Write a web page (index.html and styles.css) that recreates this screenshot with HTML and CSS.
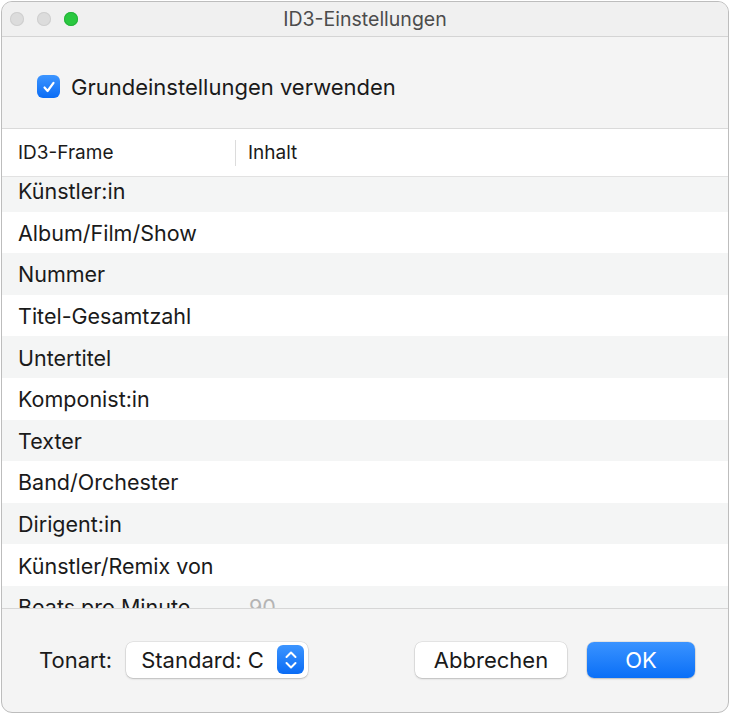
FILE: index.html
```html
<!DOCTYPE html>
<html lang="de">
<head>
    <meta charset="UTF-8">
    <title>ID3-Einstellungen</title>
    <link rel="stylesheet" href="styles.css">
</head>
<body>

<div class="window">
    <div class="titlebar">
        <div class="lights">
            <span class="light"></span>
            <span class="light"></span>
            <span class="light green"></span>
        </div>
        <div class="title">ID3-Einstellungen</div>
    </div>

    <div class="options">
        <label class="check">
            <span class="box">
                <svg width="16" height="16" viewBox="0 0 16 16">
                    <path d="M3.5 8.5 L6.6 12 L12.5 3.8" fill="none" stroke="#fff" stroke-width="2.2" stroke-linecap="round" stroke-linejoin="round"/>
                </svg>
            </span>
            Grundeinstellungen verwenden
        </label>
    </div>

    <div class="table">
        <div class="table-head">
            <div class="col-frame">ID3-Frame</div>
            <div class="col-sep"></div>
            <div class="col-content">Inhalt</div>
        </div>
        <div class="table-body">
            <div class="rows">
                <div class="row">Künstler:in</div>
                <div class="row">Album/Film/Show</div>
                <div class="row">Nummer</div>
                <div class="row">Titel-Gesamtzahl</div>
                <div class="row">Untertitel</div>
                <div class="row">Komponist:in</div>
                <div class="row">Texter</div>
                <div class="row">Band/Orchester</div>
                <div class="row">Dirigent:in</div>
                <div class="row">Künstler/Remix von</div>
                <div class="row"><span class="row-name">Beats pro Minute</span><span class="row-value">90</span></div>
            </div>
        </div>
    </div>

    <div class="footer">
        <span class="footer-label">Tonart:</span>
        <div class="popup">
            <span>Standard: C</span>
            <span class="stepper">
                <svg width="14" height="22" viewBox="0 0 14 22">
                    <path d="M2.5 8 L7 3.5 L11.5 8 M2.5 14 L7 18.5 L11.5 14" fill="none" stroke="#fff" stroke-width="2" stroke-linecap="round" stroke-linejoin="round"/>
                </svg>
            </span>
        </div>
        <div class="spacer"></div>
        <button class="btn">Abbrechen</button>
        <button class="btn primary">OK</button>
    </div>
</div>

</body>
</html>
```

FILE: styles.css
```css
body {
    margin: 0;
    padding: 0;
    background: #fff;
    font-family: 'Inter', 'Liberation Sans', sans-serif;
    color: #1a1a1a;
}

.window {
    margin: 1px;
    width: 728px;
    height: 712px;
    border: 1px solid #bdbdbd;
    border-radius: 11px;
    background: #f4f4f4;
    overflow: hidden;
    display: flex;
    flex-direction: column;
    box-sizing: border-box;
}

/* Titelleiste */
.titlebar {
    height: 35px;
    flex: 0 0 auto;
    display: flex;
    align-items: center;
    position: relative;
    background: #f0f0f0;
    border-bottom: 1px solid #d4d4d4;
    box-sizing: border-box;
}

.lights {
    display: flex;
    gap: 13px;
    padding-left: 8px;
}

.light {
    width: 14px;
    height: 14px;
    border-radius: 50%;
    background: #dcdcdc;
    box-shadow: inset 0 0 0 1px #cfcfcf;
}

.light.green {
    background: #2ac840;
    box-shadow: inset 0 0 0 1px #25b33a;
}

.title {
    position: absolute;
    left: 0;
    right: 0;
    text-align: center;
    font-size: 19.5px;
    color: #4c4c4c;
}

/* Checkbox */
.options {
    height: 91px;
    flex: 0 0 auto;
    display: flex;
    align-items: center;
    padding-left: 35px;
    padding-top: 8px;
    box-sizing: border-box;
}

.check {
    display: flex;
    align-items: center;
    gap: 11px;
    font-size: 22px;
}

.box {
    width: 23px;
    height: 23px;
    border-radius: 6px;
    background: linear-gradient(#3d95ff, #0a6cf5);
    display: flex;
    align-items: center;
    justify-content: center;
}

/* Tabelle */
.table {
    flex: 0 0 auto;
    border-top: 1px solid #dadada;
    border-bottom: 1px solid #d6d6d6;
}

.table-head {
    height: 47px;
    display: flex;
    align-items: center;
    background: #fff;
    border-bottom: 1px solid #e2e2e2;
    font-size: 19px;
}

.col-frame {
    width: 233px;
    padding-left: 16px;
    box-sizing: border-box;
}

.col-sep {
    width: 1px;
    height: 26px;
    background: #dcdcdc;
    margin-right: 12px;
}

.table-body {
    height: 431px;
    overflow: hidden;
    background: #fff;
}

.rows {
    margin-top: -7px;
}

.row {
    height: 41.6px;
    display: flex;
    align-items: center;
    padding-left: 16px;
    padding-top: 1px;
    font-size: 21.5px;
    box-sizing: border-box;
}

.row:nth-child(odd) {
    background: #f4f5f5;
}

.row-name {
    width: 231px;
}

.row-value {
    color: #b4b4b4;
}

/* Fußzeile */
.footer {
    flex: 1;
    display: flex;
    align-items: center;
    padding: 0 33px 2px 37px;
}

.footer-label {
    font-size: 22px;
    margin-right: 14px;
}

.popup {
    width: 182px;
    height: 36px;
    box-sizing: border-box;
    display: flex;
    align-items: center;
    justify-content: space-between;
    padding: 0 4px 0 15px;
    background: #fff;
    border-radius: 7px;
    box-shadow: 0 0 0 0.5px rgba(0, 0, 0, 0.12), 0 1px 2px rgba(0, 0, 0, 0.18);
    font-size: 22px;
}

.stepper {
    width: 27px;
    height: 29px;
    border-radius: 6px;
    background: linear-gradient(#3d95ff, #0a6cf5);
    display: flex;
    align-items: center;
    justify-content: center;
}

.spacer {
    flex: 1;
}

.btn {
    height: 36px;
    width: 152px;
    border: none;
    border-radius: 7px;
    background: #fff;
    box-shadow: 0 0 0 0.5px rgba(0, 0, 0, 0.12), 0 1px 2px rgba(0, 0, 0, 0.18);
    font-family: inherit;
    font-size: 22px;
    color: #1a1a1a;
}

.btn.primary {
    width: 108px;
    margin-left: 20px;
    background: linear-gradient(#3a93ff, #0a6ff7);
    color: #fff;
}
```
